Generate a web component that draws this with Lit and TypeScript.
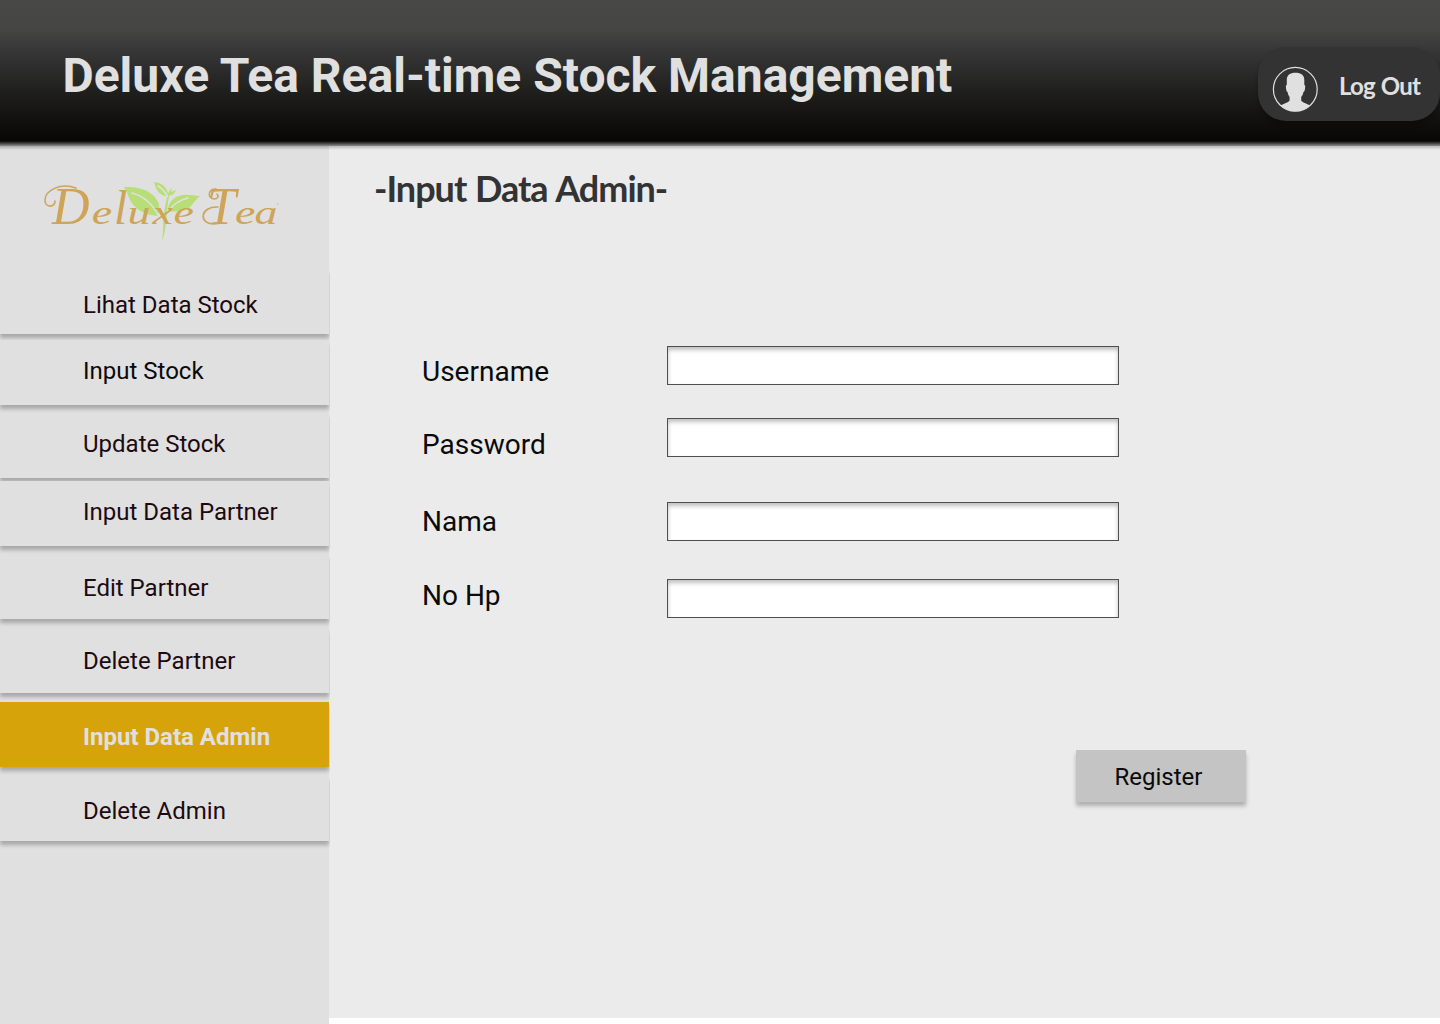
import { LitElement, html, svg, css } from "lit";
import { customElement } from "lit/decorators.js";

interface NavItem { label: string; gap: number; pad: number; tone?: string }
interface Field { label: string; gap: number; pad: number; type: string }

const NAV: NavItem[] = [
  { label: "Lihat Data Stock", gap: 0, pad: 22 },
  { label: "Input Stock", gap: 6, pad: 17, tone: "ink" },
  { label: "Update Stock", gap: 8, pad: 17 },
  { label: "Input Data Partner", gap: 3, pad: 17 },
  { label: "Edit Partner", gap: 8, pad: 20 },
  { label: "Delete Partner", gap: 9, pad: 19 },
  { label: "Input Data Admin", gap: 9, pad: 21, tone: "active" },
  { label: "Delete Admin", gap: 9, pad: 21 },
];

const FIELDS: Field[] = [
  { label: "Username", gap: 0, pad: 9, type: "text" },
  { label: "Password", gap: 33, pad: 10, type: "password" },
  { label: "Nama", gap: 45, pad: 3, type: "text" },
  { label: "No Hp", gap: 38, pad: 0, type: "tel" },
];

@customElement("app-root")
export class AppRoot extends LitElement {
  static styles = css`
    :host {
      display: flex;
      flex-direction: column;
      width: 1440px;
      height: 1024px;
      overflow: hidden;
      background: #fff;
      font-family: Roboto, "Liberation Sans", sans-serif;
    }
    * { box-sizing: border-box; }
    .header {
      height: 146px;
      flex: none;
      display: flex;
      align-items: flex-start;
      justify-content: space-between;
      padding-left: 62.5px;
      background: linear-gradient(#484846 0, #464645 28px, #363636 52px, #20201f 90px, #080705 139px, #080705 141px, #2c2b2a 142.5px, #555 144px, #8c8c8c 146px);
    }
    .title {
      margin: 48px 0 0;
      font-size: 48px;
      line-height: 56px;
      font-weight: 700;
      color: #e0e0e0;
      white-space: nowrap;
    }
    .logout {
      margin-top: 47px;
      width: 182px;
      height: 74px;
      border: 0;
      border-radius: 28px;
      background: #333;
      color: #e0e0e0;
      box-shadow: 0 4px 4px rgba(0, 0, 0, 0.25);
      display: flex;
      align-items: flex-start;
      padding: 19px 0 0 14px;
      font: 700 24px/29px Lato, sans-serif;
      text-align: left;
      white-space: nowrap;
    }
    .avatar { width: 46px; height: 46px; flex: none; }
    .logout-text { padding: 5px 0 0 21px; letter-spacing: -0.8px; word-spacing: 1px; }
    .body { display: flex; flex: 1; min-height: 0; }
    .sidebar {
      width: 329px;
      flex: none;
      z-index: 1;
      background: linear-gradient(rgba(0,0,0,.25), rgba(0,0,0,0) 4px), #e0e0e0;
    }
    .brand { display: block; width: 260px; height: 75px; margin: 28px 0 20px 35px; }
    .nav { display: flex; flex-direction: column; }
    .item {
      height: 65px;
      padding-left: 83px;
      font-size: 24px;
      line-height: 28px;
      color: #1c0a10;
      background: #e0e0e0;
      box-shadow: 0 4px 4px rgba(0, 0, 0, 0.25);
      clip-path: inset(0 -1px -8px 0);
      white-space: nowrap;
    }
    .ink { color: #0a0a0a; }
    .active { background: #d6a30b; color: #e0e0e0; font-weight: 700; }
    .main {
      flex: 1;
      height: 872px;
      background: linear-gradient(rgba(0,0,0,.22), rgba(0,0,0,0) 4px), #ebebeb;
    }
    .heading {
      margin: 20px 0 0 45px;
      font: 700 36px/44px Lato, sans-serif;
      letter-spacing: -1px;
      word-spacing: 1px;
      color: #333;
      white-space: nowrap;
    }
    .form { margin: 136px 0 0 93px; display: flex; flex-direction: column; }
    .field { display: flex; height: 39px; }
    .label { width: 245px; font-size: 28px; line-height: 33px; color: #0a0a0a; }
    .input {
      width: 452px;
      height: 39px;
      border: 1px solid #4f4f4f;
      border-radius: 0;
      background: #fff;
      box-shadow: inset 0 3px 4px rgba(0, 0, 0, 0.25);
      padding: 0 10px;
      font: 24px Roboto, sans-serif;
      outline: none;
    }
    .register {
      width: 170px;
      height: 52px;
      margin: 132px 0 0 654px;
      border: 0;
      background: #c4c4c4;
      box-shadow: 0 4px 4px rgba(0, 0, 0, 0.25);
      padding: 1px 0 0 38.5px;
      text-align: left;
      font: 24px/28px Roboto, sans-serif;
      color: #0a0a0a;
    }
    .script {
      font-family: "Liberation Serif", serif;
      font-style: italic;
      fill: #cda458;
    }
  `;

  private avatar() {
    return svg`<svg class="avatar" viewBox="0 0 46 46">
      <circle cx="23.3" cy="23.3" r="21.9" fill="none" stroke="#e0e0e0" stroke-width="1.2"/>
      <path fill="#e0e0e0" d="M23.5 6.800C18 6.800 14.800 9 14.800 14V19C13.800 19 13.800 20 14 22C14.200 24.500 14.700 25.800 15.600 26C16 28.500 16.700 29.500 17.600 31V34.500C16.500 36.500 12 37.500 8.600 39.500C12.500 43.300 17.500 45.300 23.300 45.300C29 45.300 34.200 43.300 38 39.500C34.700 37.500 30.200 36.500 29.200 34.500V31C30.200 29.500 31 28.500 31.400 26C32.300 25.800 32.900 24.500 33.100 22C33.300 20 33.300 19 32.300 19V14C32.300 9 29 6.800 23.500 6.800Z"/>
    </svg>`;
  }

  private brand() {
    return svg`<svg class="brand" viewBox="35 174 260 75" role="img" aria-label="Deluxe Tea">
      <g fill="#b8de78">
        <path d="M124 187c16-1 29 4 34 15 2 5 1.500 10-.5 14-14-1-24-8-28-17-1.500-4-3-9-5.500-12z"/>
        <path d="M168 212c-1-9 6-16 15-17 6-.7 12 1 17 1-7 6-9 13-17 15-6 1.500-11-.5-15 1z"/>
        <path d="M154 182c8 1 14 5 14 14-7 1-12-5-14-14z"/>
        <path d="M168 196c0-4 1.500-6 4-8l-1 4 5-2c-1 3-3 5-8 6z"/>
        <path d="M162 241c2-14 0-27 6-47l1.500.3c-4 18-1.500 31-7.500 46.700z"/>
      </g>
      <g fill="none" stroke="#e0e0e0" stroke-width="1.500" stroke-linecap="round">
        <path d="M132 193c11 3 20 10 26 22M158 186c5 3 7 6 9.500 10M168 212c5-8 11-12 20-14"/>
      </g>
      <g class="script">
        <text x="52" y="224" font-size="52">D</text>
        <text x="114" y="224" font-size="48">l</text>
        <text x="207" y="224" font-size="52">T</text>
        <g transform="scale(1.35 1)" font-size="34">
          <text x="68" y="224">e</text>
          <text x="94.5" y="224">u</text>
          <text x="113" y="224">x</text>
          <text x="128.500" y="224">e</text>
          <text x="174" y="224">e</text>
          <text x="188.500" y="224">a</text>
        </g>
      </g>
      <g fill="none" stroke="#cda458" stroke-width="1.600" stroke-linecap="round">
        <path d="M76 188C60 182 45 191 45 200c0 8 10 8 10 1"/>
        <path d="M216 189c-8 0-9 9-2 10 4 0 5-3 3-5M218 207c-18-1-20 17-4 17 3 0 5-.5 7-2"/>
        <circle cx="277.500" cy="204" r=".4" stroke-width=".5" opacity=".5"/>
      </g>
    </svg>`;
  }

  render() {
    return html`
      <header class="header">
        <h1 class="title">Deluxe Tea Real-time Stock Management</h1>
        <button class="logout">${this.avatar()}<span class="logout-text">Log Out</span></button>
      </header>
      <div class="body">
        <aside class="sidebar">
          ${this.brand()}
          <nav class="nav">
            ${NAV.map((n) => html`<a class="item ${n.tone ?? ""}" style="margin-top:${n.gap}px;padding-top:${n.pad}px">${n.label}</a>`)}
          </nav>
        </aside>
        <main class="main">
          <h2 class="heading">-Input Data Admin-</h2>
          <form class="form">
            ${FIELDS.map((f) => html`<label class="field" style="margin-top:${f.gap}px"><span class="label" style="padding-top:${f.pad}px">${f.label}</span><input class="input" type=${f.type} /></label>`)}
            <button class="register" type="button">Register</button>
          </form>
        </main>
      </div>
    `;
  }
}
